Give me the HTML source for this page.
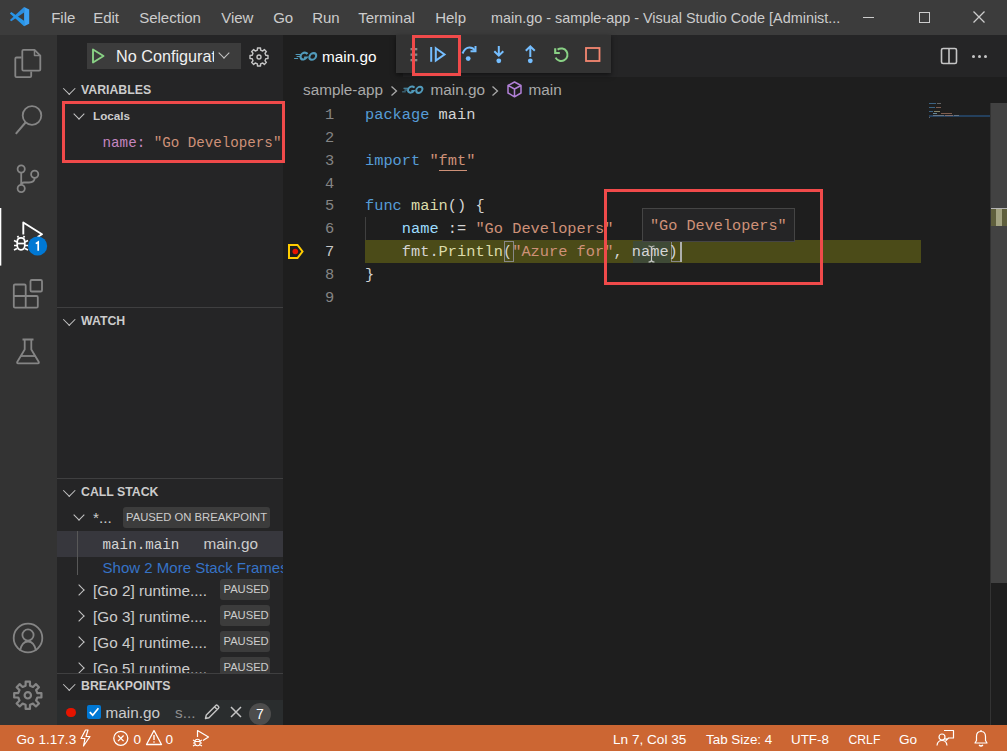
<!DOCTYPE html>
<html><head><meta charset="utf-8">
<style>
*{margin:0;padding:0;box-sizing:border-box}
html,body{width:1007px;height:751px;overflow:hidden;background:#1e1e1e;font-family:"Liberation Sans",sans-serif;color:#cccccc}
.a{position:absolute}
.t{position:absolute;white-space:pre;line-height:1}
#title{left:0;top:0;width:1007px;height:35px;background:#3c3c3c}
#act{left:0;top:35px;width:57px;height:690px;background:#333333}
#side{left:57px;top:35px;width:226px;height:690px;background:#252526;overflow:hidden}
#tabs{left:283px;top:35px;width:724px;height:42px;background:#252526}
#status{left:0;top:725px;width:1007px;height:26px;background:#cc6633;color:#fff}
.menu{font-size:15px;color:#cccccc;top:10px}
.mono{font-family:"Liberation Mono",monospace}
.hdr{font-size:12.3px;font-weight:700;color:#cccccc}
.chev{position:absolute;width:8px;height:8px;border-right:1.3px solid #c5c5c5;border-bottom:1.3px solid #c5c5c5}
.border{position:absolute;left:0;width:226px;height:1px;background:#3f3f40}
.badge{position:absolute;background:#3c3c3c;border-radius:3px;color:#cccccc;font-size:13px}
.code{font-family:"Liberation Mono",monospace;font-size:15.33px;color:#d4d4d4}
.ln{position:absolute;font-family:"Liberation Mono",monospace;font-size:15.33px;color:#858585;white-space:pre;line-height:1}
.kw{color:#569cd6}.fn{color:#dcdcaa}.str{color:#ce9178}.var{color:#9cdcfe}
.red{position:absolute;border:3px solid #f04a4a}
</style></head>
<body>
<!-- TITLE BAR -->
<div id="title" class="a">
  <svg class="a" style="left:0;top:0" width="40" height="35" viewBox="0 0 40 35"><path d="M24.1 6.9 L29.2 9.4 V23.7 L24.1 26.2 Z" fill="#3aa0f3"/><path d="M24.1 6.9 L24.4 12.3 L11.3 21.3 L9.9 20 Z" fill="#2b8ee0"/><path d="M11.3 12 L24.4 21 L24.1 26.2 L9.9 13.5 Z" fill="#2796e8"/></svg>
  <span class="t menu" style="left:51.2px">File</span>
  <span class="t menu" style="left:93.2px">Edit</span>
  <span class="t menu" style="left:139.2px">Selection</span>
  <span class="t menu" style="left:221.2px">View</span>
  <span class="t menu" style="left:273.2px">Go</span>
  <span class="t menu" style="left:312.2px">Run</span>
  <span class="t menu" style="left:358.2px">Terminal</span>
  <span class="t menu" style="left:435.2px">Help</span>
  <span class="t menu" style="top:11px;left:491px;font-size:14.4px">main.go - sample-app - Visual Studio Code [Administ...</span>
  <div class="a" style="left:863px;top:17px;width:11px;height:1.2px;background:#cccccc"></div>
  <div class="a" style="left:918.5px;top:11.5px;width:11px;height:11px;border:1.2px solid #cccccc"></div>
  <svg class="a" style="left:972px;top:10px" width="14" height="14" viewBox="0 0 14 14"><path d="M1.5 1.5 L12.5 12.5 M12.5 1.5 L1.5 12.5" stroke="#cccccc" stroke-width="1.3"/></svg>
</div>
<!-- ACTIVITY BAR -->
<div id="act" class="a"></div>
<svg class="a" style="left:0;top:0" width="57" height="725" viewBox="0 0 57 725" fill="none" stroke="#858585" stroke-width="1.8" stroke-linejoin="round">
  <!-- files -->
  <path d="M21.5 57.5 H16.5 Q15.3 57.5 15.3 58.7 V76 Q15.3 77.2 16.5 77.2 H30 Q31.2 77.2 31.2 76 V71.5"/>
  <path d="M23.5 49.8 H34.5 L40.3 55.6 V69.5 Q40.3 70.7 39.1 70.7 H23.5 Q22.3 70.7 22.3 69.5 V51 Q22.3 49.8 23.5 49.8 Z"/>
  <path d="M34.5 49.8 V55.6 H40.3" stroke-width="1.5"/>
  <!-- search -->
  <circle cx="32" cy="115.5" r="9.3"/>
  <path d="M25.5 122.5 L15.8 133.8" stroke-width="2"/>
  <!-- scm -->
  <circle cx="21.2" cy="169" r="3.6"/>
  <circle cx="21.2" cy="188.5" r="3.6"/>
  <circle cx="34.7" cy="174.2" r="3.6"/>
  <path d="M21.2 172.6 V184.9"/>
  <path d="M34.7 177.8 Q34.7 182.5 29 182.5 H24 Q21.2 182.5 21.2 185"/>
  <!-- active indicator -->
  <rect x="0" y="208" width="1.3" height="57.6" fill="#ffffff" stroke="none"/>
  <!-- debug -->
  <path d="M23.3 234.5 V222.5 L42 234.3 L37.5 237" stroke="#ffffff" stroke-width="1.9"/>
  <g stroke="#ffffff" stroke-width="1.7">
    <path d="M21 249.8 Q17.2 249.8 17.2 245 V242 Q17.2 237.8 21 237.8 Q24.8 237.8 24.8 242 V245 Q24.8 249.8 21 249.8 Z"/>
    <path d="M17.2 243.5 H24.8"/>
    <path d="M14 240.5 L17 242 M14 245.5 H17 M14 250 L17 248.5 M28 240.5 L25 242 M28 245.5 H25 M28 250 L25 248.5 M18.5 237.5 L17.5 236 M23.5 237.5 L24.5 236"/>
  </g>
  <circle cx="37.6" cy="246" r="9.6" fill="#0078d4" stroke="none"/>
  <path d="M35.8 243.6 L38.2 242 V250.8" stroke="#ffffff" stroke-width="1.7" stroke-linejoin="miter"/>
  <!-- extensions -->
  <path d="M15 284.5 H24.5 Q25.7 284.5 25.7 285.7 V296 H36.6 Q37.8 296 37.8 297.2 V306.5 Q37.8 307.7 36.6 307.7 H15 Q13.8 307.7 13.8 306.5 V285.7 Q13.8 284.5 15 284.5 Z"/>
  <path d="M13.8 296 H25.7 V307.7"/>
  <rect x="30.5" y="280" width="11.5" height="11.5" rx="1.3"/>
  <!-- testing -->
  <path d="M22.5 339.5 H33.5 M24.7 339.5 V349.5 L17.2 362 Q16.8 363.3 18 363.3 H38 Q39.2 363.3 38.8 362 L31.3 349.5 V339.5"/>
  <path d="M20.8 356 H35.2"/>
  <!-- account -->
  <circle cx="28" cy="638" r="14.3"/>
  <circle cx="28" cy="635" r="5.6"/>
  <path d="M20 650.5 Q22 641.5 28 641.5 Q34 641.5 36 650.5"/>
  <!-- manage gear -->
  <g transform="translate(27.8 695.3)">
    <path id="gearp" d="M-2.20 -9.55 L-2.16 -13.63 L2.16 -13.63 L2.20 -9.55 L5.19 -8.31 L8.11 -11.16 L11.16 -8.11 L8.31 -5.19 L9.55 -2.20 L13.63 -2.16 L13.63 2.16 L9.55 2.20 L8.31 5.19 L11.16 8.11 L8.11 11.16 L5.19 8.31 L2.20 9.55 L2.16 13.63 L-2.16 13.63 L-2.20 9.55 L-5.19 8.31 L-8.11 11.16 L-11.16 8.11 L-8.31 5.19 L-9.55 2.20 L-13.63 2.16 L-13.63 -2.16 L-9.55 -2.20 L-8.31 -5.19 L-11.16 -8.11 L-8.11 -11.16 L-5.19 -8.31 Z" stroke-width="2.2"/>
    <circle r="3.2" stroke-width="2.2"/>
  </g>
</svg>
<!-- SIDEBAR -->
<div id="side" class="a">
  <!-- debug header -->
  <div class="a" style="left:30px;top:8px;width:154px;height:26px;background:#3c3c3c"></div>
  <svg class="a" style="left:33px;top:12px" width="16" height="18" viewBox="0 0 16 18"><path d="M3 2.5 L13.5 9 L3 15.5 Z" fill="none" stroke="#89d185" stroke-width="1.9" stroke-linejoin="round"/></svg>
  <div class="a" style="left:59px;top:8px;width:98px;height:26px;overflow:hidden"><span class="t" style="left:0;top:5px;font-size:16.2px;color:#f0f0f0">No Configuration</span></div>
  <div class="chev" style="left:163px;top:14px;transform:rotate(45deg)"></div>
  <svg class="a" style="left:191px;top:11px" width="22" height="22" viewBox="-11 -11 22 22"><path d="M-1.60 -6.9 L-1.55 -9.0 L1.55 -9.0 L1.60 -6.9 L3.75 -6.0 L5.35 -7.4 L7.4 -5.35 L6.0 -3.75 L6.9 -1.60 L9.0 -1.55 L9.0 1.55 L6.9 1.60 L6.0 3.75 L7.4 5.35 L5.35 7.4 L3.75 6.0 L1.60 6.9 L1.55 9.0 L-1.55 9.0 L-1.60 6.9 L-3.75 6.0 L-5.35 7.4 L-7.4 5.35 L-6.0 3.75 L-6.9 1.60 L-9.0 1.55 L-9.0 -1.55 L-6.9 -1.60 L-6.0 -3.75 L-7.4 -5.35 L-5.35 -7.4 L-3.75 -6.0 Z" fill="none" stroke="#c5c5c5" stroke-width="1.4" stroke-linejoin="round"/><circle r="2" fill="none" stroke="#c5c5c5" stroke-width="1.4"/></svg>
  <!-- VARIABLES -->
  <div class="chev" style="left:7.5px;top:49.3px;width:8.5px;height:8.5px;transform:rotate(45deg)"></div>
  <span class="t hdr" style="left:24px;top:49px">VARIABLES</span>
  <div class="chev" style="left:18px;top:75px;transform:rotate(45deg)"></div>
  <span class="t" style="left:36px;top:75px;font-size:11.7px;font-weight:700;color:#cccccc">Locals</span>
  <span class="t mono" style="left:45.6px;top:101px;font-size:14.2px"><span style="color:#c586c0">name:</span> <span style="color:#ce9178">"Go Developers"</span></span>
  <!-- WATCH -->
  <div class="border" style="top:272px"></div>
  <div class="chev" style="left:7.5px;top:280.3px;width:8.5px;height:8.5px;transform:rotate(45deg)"></div>
  <span class="t hdr" style="left:24px;top:280px">WATCH</span>
  <!-- CALL STACK -->
  <div class="border" style="top:443px"></div>
  <div class="chev" style="left:7.5px;top:451.3px;width:8.5px;height:8.5px;transform:rotate(45deg)"></div>
  <span class="t hdr" style="left:24px;top:451px">CALL STACK</span>
  <div class="chev" style="left:18px;top:476px;transform:rotate(45deg)"></div>
  <span class="t" style="left:36px;top:475px;font-size:15.3px;color:#cccccc">*...</span>
  <div class="badge" style="left:66px;top:472px;width:147px;height:21px"></div>
  <span class="t" style="left:69px;top:477px;font-size:11.25px;color:#cccccc">PAUSED ON BREAKPOINT</span>
  <div class="a" style="left:0;top:496px;width:226px;height:26.4px;background:#37373d"></div>
  <div class="a" style="left:19.5px;top:496px;width:1px;height:44px;background:#585858"></div>
  <span class="t mono" style="left:45.6px;top:503px;font-size:14.2px;color:#d4d4d4">main.main</span>
  <span class="t" style="left:146.5px;top:501px;font-size:15.3px;color:#cccccc">main.go</span>
  <span class="t" style="left:45.6px;top:525px;font-size:15px;color:#3673c6">Show 2 More Stack Frames</span>
  <div class="chev" style="left:18px;top:551px;transform:rotate(-45deg)"></div>
  <span class="t" style="left:36px;top:548px;font-size:15.3px;color:#cccccc">[Go 2] runtime....</span>
  <div class="badge" style="left:163px;top:544px;width:50px;height:21px"></div>
  <span class="t" style="left:166.5px;top:549px;font-size:11.2px;color:#cccccc">PAUSED</span>
  <div class="chev" style="left:18px;top:577px;transform:rotate(-45deg)"></div>
  <span class="t" style="left:36px;top:574px;font-size:15.3px;color:#cccccc">[Go 3] runtime....</span>
  <div class="badge" style="left:163px;top:570px;width:50px;height:21px"></div>
  <span class="t" style="left:166.5px;top:575px;font-size:11.2px;color:#cccccc">PAUSED</span>
  <div class="chev" style="left:18px;top:603px;transform:rotate(-45deg)"></div>
  <span class="t" style="left:36px;top:600px;font-size:15.3px;color:#cccccc">[Go 4] runtime....</span>
  <div class="badge" style="left:163px;top:596px;width:50px;height:21px"></div>
  <span class="t" style="left:166.5px;top:601px;font-size:11.2px;color:#cccccc">PAUSED</span>
  <div class="a" style="left:0;top:620px;width:226px;height:17.5px;overflow:hidden">
    <div class="chev" style="left:18px;top:9px;transform:rotate(-45deg)"></div>
    <span class="t" style="left:36px;top:6px;font-size:15.3px;color:#cccccc">[Go 5] runtime....</span>
    <div class="badge" style="left:163px;top:2px;width:50px;height:21px"></div>
    <span class="t" style="left:166.5px;top:7px;font-size:11.2px;color:#cccccc">PAUSED</span>
  </div>
  <!-- BREAKPOINTS -->
  <div class="border" style="top:637.5px"></div>
  <div class="chev" style="left:7.5px;top:645.3px;width:8.5px;height:8.5px;transform:rotate(45deg)"></div>
  <span class="t hdr" style="left:24px;top:645px">BREAKPOINTS</span>
  <div class="a" style="left:0;top:664.5px;width:226px;height:25.5px;background:#2a2d2e"></div>
  <div class="a" style="left:9px;top:672.5px;width:9.5px;height:9.5px;border-radius:50%;background:#e51400"></div>
  <div class="a" style="left:30px;top:669.5px;width:14px;height:14px;background:#0078d4;border-radius:2px"></div>
  <svg class="a" style="left:30px;top:669.5px" width="14" height="14" viewBox="0 0 14 14"><path d="M2.8 7.2 L5.7 10.2 L11.4 3.2" fill="none" stroke="#fff" stroke-width="1.7"/></svg>
  <span class="t" style="left:48.6px;top:670px;font-size:15.3px;color:#cccccc">main.go</span>
  <span class="t" style="left:118px;top:670px;font-size:15.3px;color:#8f8f8f">s...</span>
  <svg class="a" style="left:146px;top:668px" width="18" height="18" viewBox="0 0 18 18"><path d="M2.5 15.5 L3.3 12 L12.8 2.5 Q13.6 1.7 14.5 2.5 L15.5 3.5 Q16.3 4.3 15.5 5.2 L6 14.7 Z M11.5 3.8 L14.2 6.5" fill="none" stroke="#c5c5c5" stroke-width="1.4" stroke-linejoin="round"/></svg>
  <svg class="a" style="left:172px;top:670px" width="14" height="14" viewBox="0 0 14 14"><path d="M2 2 L12 12 M12 2 L2 12" stroke="#c5c5c5" stroke-width="1.5"/></svg>
  <div class="a" style="left:192px;top:667.5px;width:22px;height:22px;border-radius:50%;background:#4d4d4d"></div>
  <span class="t" style="left:199px;top:672px;font-size:14px;color:#ffffff">7</span>
</div>
<div class="red" style="left:62px;top:101px;width:223px;height:62px"></div>
<!-- TABS -->
<div id="tabs" class="a"></div>
<div class="a" style="left:283px;top:35px;width:120px;height:42px;background:#1e1e1e"></div>
<svg class="a" style="left:294px;top:49px" width="26" height="14" viewBox="0 0 26 14"><g transform="skewX(-14) translate(2 0)" fill="none" stroke="#519aba"><path d="M1 5.6 H6 M2.5 7.6 H6 M0.5 9.6 H4.5" stroke-width="1"/><path d="M12.6 5.2 A3.4 3.4 0 1 0 12.8 8.6 H10.2" stroke-width="2.1"/><circle cx="18.6" cy="7.4" r="3.3" stroke-width="2.1"/></g></svg>
<span class="t" style="left:322px;top:48.5px;font-size:15.3px;color:#ffffff">main.go</span>
<!-- right tab actions -->
<svg class="a" style="left:940px;top:47px" width="18" height="18" viewBox="0 0 18 18"><rect x="1.5" y="1.5" width="15" height="15" rx="1.6" fill="none" stroke="#c5c5c5" stroke-width="1.6"/><path d="M9 1.5 V16.5" stroke="#c5c5c5" stroke-width="1.6"/></svg>
<div class="a" style="left:971.8px;top:55px;width:3px;height:3px;border-radius:50%;background:#c5c5c5"></div>
<div class="a" style="left:977.8px;top:55px;width:3px;height:3px;border-radius:50%;background:#c5c5c5"></div>
<div class="a" style="left:983.8px;top:55px;width:3px;height:3px;border-radius:50%;background:#c5c5c5"></div>
<!-- breadcrumbs -->
<span class="t" style="left:303px;top:82px;font-size:15.3px;color:#a9a9a9">sample-app</span>
<svg class="a" style="left:389px;top:85px" width="10" height="12" viewBox="0 0 10 12"><path d="M2.5 1.5 L7.5 6 L2.5 10.5" fill="none" stroke="#a9a9a9" stroke-width="1.3"/></svg>
<svg class="a" style="left:402px;top:83px" width="24" height="13" viewBox="0 0 26 14"><g transform="skewX(-14) translate(2 0)" fill="none" stroke="#519aba"><path d="M1 5.6 H6 M2.5 7.6 H6 M0.5 9.6 H4.5" stroke-width="1"/><path d="M12.6 5.2 A3.4 3.4 0 1 0 12.8 8.6 H10.2" stroke-width="2.1"/><circle cx="18.6" cy="7.4" r="3.3" stroke-width="2.1"/></g></svg>
<span class="t" style="left:430.5px;top:82px;font-size:15.3px;color:#a9a9a9">main.go</span>
<svg class="a" style="left:490px;top:85px" width="10" height="12" viewBox="0 0 10 12"><path d="M2.5 1.5 L7.5 6 L2.5 10.5" fill="none" stroke="#a9a9a9" stroke-width="1.3"/></svg>
<svg class="a" style="left:505px;top:80px" width="19" height="19" viewBox="0 0 19 19"><path d="M9.5 2 L16 5.5 V13 L9.5 16.8 L3 13 V5.5 Z M3 5.5 L9.5 9 L16 5.5 M9.5 9 V16.8" fill="none" stroke="#b180d7" stroke-width="1.5" stroke-linejoin="round"/></svg>
<span class="t" style="left:528.5px;top:82px;font-size:15.3px;color:#a9a9a9">main</span>
<!-- code -->
<div class="a" style="left:365px;top:240px;width:556px;height:22.8px;background:#4b4b18"></div>
<div class="a" style="left:365px;top:217px;width:1px;height:23px;background:#404040"></div>
<div class="a" style="left:633px;top:240.5px;width:37px;height:22px;background:#3f4a36"></div>
<div class="a" style="left:503.5px;top:241px;width:10px;height:21px;border:1px solid #888888"></div>
<div class="a" style="left:670.5px;top:241px;width:10px;height:21px;border:1px solid #888888"></div>
<div class="a" style="left:679.5px;top:241px;width:2px;height:21px;background:#aeafad"></div>
<div id="lines">
<span class="ln" style="left:325px;top:108px">1</span>
<span class="ln" style="left:325px;top:131px">2</span>
<span class="ln" style="left:325px;top:154px">3</span>
<span class="ln" style="left:325px;top:177px">4</span>
<span class="ln" style="left:325px;top:199px">5</span>
<span class="ln" style="left:325px;top:222px">6</span>
<span class="ln" style="left:325px;top:245px;color:#c6c6c6">7</span>
<span class="ln" style="left:325px;top:268px">8</span>
<span class="ln" style="left:325px;top:291px">9</span>
</div>
<span class="t code" style="left:365px;top:108px"><span class="kw">package</span> main</span>
<span class="t code" style="left:365px;top:154px"><span class="kw">import</span> <span class="str">"fmt"</span></span>
<div class="a" style="left:439px;top:170px;width:27.5px;height:1.2px;background:#ce9178"></div>
<span class="t code" style="left:365px;top:199px"><span class="kw">func</span> <span class="fn">main</span>() {</span>
<span class="t code" style="left:365px;top:222px">    <span class="var">name</span> := <span class="str">"Go Developers"</span></span>
<span class="t code" style="left:365px;top:245px">    <span class="var" style="color:#d4d4d4">fmt</span>.<span class="fn">Println</span>(<span class="str">"Azure for"</span>, <span class="var" style="color:#d4d4d4">name</span>)</span>
<span class="t code" style="left:365px;top:268px">}</span>
<!-- breakpoint arrow -->
<svg class="a" style="left:287px;top:243px" width="18" height="17" viewBox="0 0 18 17"><path d="M2 2 H10.5 L15.5 8.5 L10.5 15 H2 Z" fill="none" stroke="#ffcc00" stroke-width="2" stroke-linejoin="miter"/><circle cx="8.3" cy="8.5" r="2.8" fill="#e51400"/></svg>
<!-- i-beam -->
<svg class="a" style="left:647px;top:245px" width="9" height="18" viewBox="0 0 9 18"><path d="M1.5 1 Q4.5 1 4.5 3 V15 Q4.5 17 1.5 17 M7.5 1 Q4.5 1 4.5 3 M4.5 15 Q4.5 17 7.5 17" fill="none" stroke="#c8c8c8" stroke-width="1.1"/></svg>
<!-- hover -->
<div class="a" style="left:642px;top:208px;width:153px;height:34px;background:#252526;border:1px solid #454545"></div>
<span class="t mono" style="left:650px;top:219px;font-size:15.2px;color:#ce9178">"Go Developers"</span>
<!-- minimap -->
<div class="a" style="left:929px;top:115.3px;width:61px;height:1.6px;background:#264f78;opacity:0.7"></div>
<svg class="a" style="left:928px;top:102px" width="62" height="20" viewBox="0 0 62 20"><g stroke-width="1" opacity="0.55">
<path d="M1 1.5 H8" stroke="#569cd6"/><path d="M9 1.5 H13" stroke="#a0a0a0"/>
<path d="M1 5.5 H7" stroke="#569cd6"/><path d="M8 5.5 H13" stroke="#ce9178"/>
<path d="M1 9.5 H5" stroke="#569cd6"/><path d="M6 9.5 H12" stroke="#dcdcaa"/>
<path d="M5 11.5 H9" stroke="#9cdcfe"/><path d="M13 11.5 H24" stroke="#ce9178"/>
<path d="M5 13.5 H16" stroke="#a0a0a0"/><path d="M17 13.5 H25" stroke="#ce9178"/><path d="M26 13.5 H31" stroke="#a0a0a0"/>
<path d="M1 15.5 H2" stroke="#a0a0a0"/></g></svg>
<!-- scrollbar -->
<div class="a" style="left:990px;top:103px;width:1px;height:622px;background:#333333"></div>
<div class="a" style="left:991px;top:103px;width:16px;height:480px;background:#424242"></div>
<div class="a" style="left:991px;top:207.6px;width:16px;height:1.5px;background:#b5b5b5"></div>
<div class="a" style="left:991px;top:209px;width:16px;height:17px;background:#5f5f3d"></div>
<div class="a" style="left:996px;top:209px;width:6px;height:17px;background:#a3a382"></div>
<!-- debug toolbar -->
<div class="a" style="left:396px;top:35px;width:215px;height:38px;background:#333333;box-shadow:0 2px 5px rgba(0,0,0,0.55)"></div>
<svg class="a" style="left:396px;top:35px" width="215" height="38" viewBox="396 35 215 38">
  <g fill="#8a8a8a"><rect x="410.5" y="48" width="2.3" height="2.3"/><rect x="415" y="48" width="2.3" height="2.3"/><rect x="410.5" y="53.5" width="2.3" height="2.3"/><rect x="415" y="53.5" width="2.3" height="2.3"/><rect x="410.5" y="59" width="2.3" height="2.3"/><rect x="415" y="59" width="2.3" height="2.3"/></g>
  <g stroke="#75beff" fill="none" stroke-width="2">
    <path d="M431.2 47 V61.8"/>
    <path d="M435.8 48.3 L444.5 54.5 L435.8 60.6 Z" stroke-linejoin="miter"/>
    <path d="M462.5 53.5 Q465 47.5 469.5 47.5 Q473 47.5 475 50.5"/>
    <path d="M475.5 46 V51.2 H470.5" stroke-linejoin="miter"/>
    <path d="M498.8 46 V55.5 M494.3 51.2 L498.8 55.7 L503.3 51.2"/>
    <path d="M530.3 57 V46.5 M525.8 50.8 L530.3 46.3 L534.8 50.8"/>
  </g>
  <g fill="#75beff"><circle cx="468.2" cy="58.6" r="2.4"/><circle cx="498.8" cy="60.8" r="2.4"/><circle cx="530.3" cy="60.8" r="2.4"/></g>
  <path d="M555.6 57.6 A6.3 6.3 0 1 0 557.6 49.6" fill="none" stroke="#89d185" stroke-width="2"/>
  <path d="M555.2 48.3 V53 H559.8" fill="none" stroke="#89d185" stroke-width="2.1" stroke-linejoin="miter"/>
  <rect x="586" y="48" width="13.5" height="13" fill="none" stroke="#f48771" stroke-width="1.8"/>
</svg>
<div class="red" style="left:412px;top:35px;width:49px;height:41px"></div>
<div class="red" style="left:604px;top:189px;width:219px;height:96px"></div>
<!-- STATUS -->
<div id="status" class="a">
  <span class="t" style="left:16.5px;top:7.5px;font-size:13.6px;color:#fff">Go 1.17.3</span>
  <svg class="a" style="left:79px;top:4px" width="13" height="18" viewBox="0 0 13 18"><path d="M6.5 1 L2 9.5 H6 L4.5 17 L11 7.5 H7 L9 1 Z" fill="none" stroke="#fff" stroke-width="1.2" stroke-linejoin="round"/></svg>
  <svg class="a" style="left:112px;top:5px" width="18" height="17" viewBox="0 0 18 17"><circle cx="8.8" cy="8.3" r="7" fill="none" stroke="#fff" stroke-width="1.3"/><path d="M6 5.5 L11.6 11.1 M11.6 5.5 L6 11.1" stroke="#fff" stroke-width="1.3"/></svg>
  <span class="t" style="left:133.5px;top:7.5px;font-size:13.6px;color:#fff">0</span>
  <svg class="a" style="left:145px;top:4px" width="18" height="17" viewBox="0 0 18 17"><path d="M9 1.5 L16.5 15.5 H1.5 Z" fill="none" stroke="#fff" stroke-width="1.3" stroke-linejoin="round"/><path d="M9 6 V11" stroke="#fff" stroke-width="1.4"/><circle cx="9" cy="13" r="0.8" fill="#fff"/></svg>
  <span class="t" style="left:165.5px;top:7.5px;font-size:13.6px;color:#fff">0</span>
  <svg class="a" style="left:191px;top:3px" width="20" height="20" viewBox="0 0 20 20"><path d="M6.5 9 V2.5 L17.5 9 L12 12.5" fill="none" stroke="#fff" stroke-width="1.2" stroke-linejoin="round"/><g fill="none" stroke="#fff" stroke-width="1.1"><ellipse cx="6.5" cy="14.5" rx="2.7" ry="3.3"/><path d="M3.8 13.5 H9.2 M2 12 L3.8 13 M2 15 H3.8 M2 18 L3.8 17 M11 12 L9.2 13 M11 15 H9.2 M11 18 L9.2 17"/></g></svg>
  <span class="t" style="left:613px;top:7.5px;font-size:13.6px;color:#fff">Ln 7, Col 35</span>
  <span class="t" style="left:706px;top:7.5px;font-size:13.4px;color:#fff">Tab Size: 4</span>
  <span class="t" style="left:791px;top:7.5px;font-size:13.4px;color:#fff">UTF-8</span>
  <span class="t" style="left:848.5px;top:8.5px;font-size:12.2px;color:#fff">CRLF</span>
  <span class="t" style="left:899px;top:7.5px;font-size:13.6px;color:#fff">Go</span>
  <svg class="a" style="left:936px;top:4px" width="19" height="18" viewBox="0 0 19 18"><g fill="none" stroke="#fff" stroke-width="1.2" stroke-linejoin="round"><path d="M8 1.5 H17.5 V9 H12.5 L10 11.5 V9"/><circle cx="6" cy="8" r="3"/><path d="M1 16.5 Q1.5 11.5 6 11.5 Q10.5 11.5 11 16.5"/></g></svg>
  <svg class="a" style="left:972px;top:4px" width="18" height="19" viewBox="0 0 18 19"><path d="M3 14 H15 L13.5 11.5 V7.5 Q13.5 2.5 9 2.5 Q4.5 2.5 4.5 7.5 V11.5 Z M7 16 Q9 18 11 16 M9 1 V2.5" fill="none" stroke="#fff" stroke-width="1.2" stroke-linejoin="round"/></svg>
</div>
</body></html>
